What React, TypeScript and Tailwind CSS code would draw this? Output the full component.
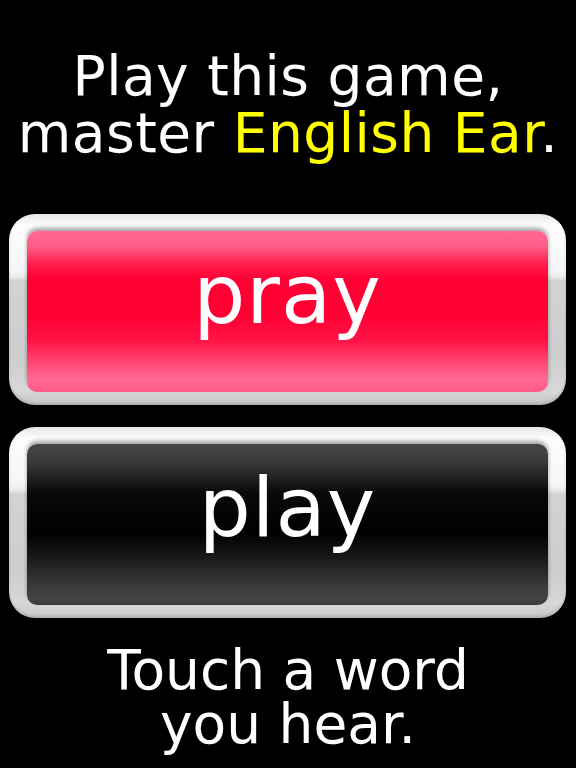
import React from "react";

const font = { fontFamily: '"DejaVu Sans", Verdana, sans-serif' };

function GlossButton({ word, kind }: { word: string; kind: "pink" | "black" }) {
  const inner =
    kind === "pink"
      ? "bg-[linear-gradient(to_bottom,#ff6791_0%,#ff5f8b_9%,#ff2050_20%,#ff0034_30%,#ff0033_52%,#ff1446_68%,#ff4675_82%,#ff6a93_92%,#ff5887_100%)]"
      : "bg-[linear-gradient(to_bottom,#464646_0%,#3c3c3c_10%,#0a0a0a_30%,#000000_55%,#1c1c1c_72%,#3a3a3a_88%,#444444_96%,#3a3a3a_100%)]";
  return (
    <div className="ml-[9px] mr-[10px] h-[191px] rounded-[26px] bg-[linear-gradient(to_bottom,#e6e6e6_0%,#fdfdfd_6%,#f6f6f6_30%,#eaeaea_33%,#d3d3d3_35%,#cdcdcd_75%,#d8d8d8_92%,#c8c8c8_100%)] pt-[17px] pl-[18px] pr-[18px] pb-[13px] shadow-[inset_0_-2px_3px_rgba(0,0,0,0.15)]">
      <div
        className={`h-full rounded-[10px] ${inner} shadow-[0_-3px_4px_rgba(0,0,0,0.35)] pt-[23px] text-center text-white text-[82px] leading-[82px] tracking-[1px]`}
        style={font}
      >
        {word}
      </div>
    </div>
  );
}

export default function App() {
  return (
    <div className="w-[576px] h-[768px] bg-black flex flex-col overflow-hidden" style={font}>
      <div className="pt-[48px] text-center text-white text-[55px] leading-[57px] tracking-[0.5px]">
        <div>Play this game,</div>
        <div>
          master <span className="text-[#ffff00]">English Ear</span>.
        </div>
      </div>
      <div className="mt-[52px]">
        <GlossButton word="pray" kind="pink" />
      </div>
      <div className="mt-[22px]">
        <GlossButton word="play" kind="black" />
      </div>
      <div className="mt-[25px] text-center text-white text-[55px] leading-[54px]">
        <div>Touch a word</div>
        <div>you hear.</div>
      </div>
    </div>
  );
}
